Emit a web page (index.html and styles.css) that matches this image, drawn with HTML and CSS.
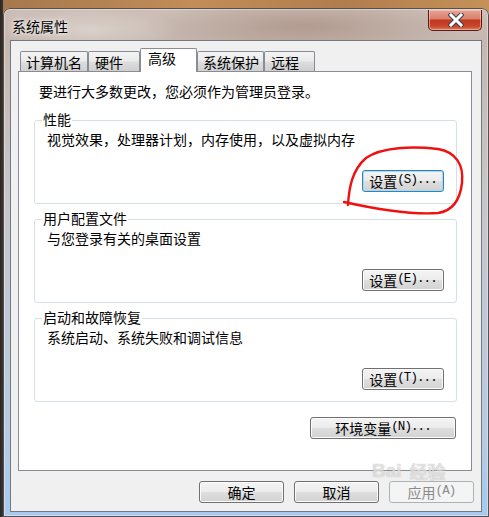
FILE: index.html
```html
<!DOCTYPE html>
<html lang="zh-CN">
<head>
<meta charset="utf-8">
<title>系统属性</title>
<link rel="stylesheet" href="styles.css">
</head>
<body>
<div class="window">
  <div class="titlebar">
    <span class="title">系统属性</span>
    <button class="close" aria-label="关闭">
      <svg width="16" height="14" viewBox="0 0 16 14">
        <path d="M3 2 L13 12 M13 2 L3 12" stroke="#3b3f55" stroke-width="5" stroke-linecap="square"/>
        <path d="M3 2 L13 12 M13 2 L3 12" stroke="#ffffff" stroke-width="3" stroke-linecap="square"/>
      </svg>
    </button>
  </div>
  <div class="client">
    <div class="tabs">
      <div class="tab w1">计算机名</div>
      <div class="tab w2">硬件</div>
      <div class="tab w3 active">高级</div>
      <div class="tab w4">系统保护</div>
      <div class="tab w5">远程</div>
    </div>
    <div class="panel">
      <p class="intro">要进行大多数更改，您必须作为管理员登录。</p>
      <div class="group">
        <span class="legend">性能</span>
        <p class="desc">视觉效果，处理器计划，内存使用，以及虚拟内存</p>
        <button class="btn set default">设置<span class="a">(S)...</span></button>
      </div>
      <div class="group">
        <span class="legend">用户配置文件</span>
        <p class="desc">与您登录有关的桌面设置</p>
        <button class="btn set">设置<span class="a">(E)...</span></button>
      </div>
      <div class="group">
        <span class="legend">启动和故障恢复</span>
        <p class="desc">系统启动、系统失败和调试信息</p>
        <button class="btn set">设置<span class="a">(T)...</span></button>
      </div>
      <button class="btn env">环境变量<span class="a">(N)...</span></button>
    </div>
    <div class="actions">
      <button class="btn act">确定</button>
      <button class="btn act">取消</button>
      <button class="btn act disabled">应用<span class="a">(A)</span></button>
    </div>
  </div>
</div>
<svg class="mark" width="489" height="517" viewBox="0 0 489 517">
  <path d="M348,205 C349,188 352,170 366,158 C382,147 412,146 438,149 C456,152 464,165 462,183 C460,200 452,211 438,213 C412,215 380,210 344,202" fill="none" stroke="#f01010" stroke-width="2.4" stroke-linecap="round"/>
</svg>
<div class="watermark"><span class="wm-big">Bai</span><span class="wm-cn">经验</span></div>
</body>
</html>
```
FILE: styles.css
```css
html, body {
  margin: 0;
  padding: 0;
}
body {
  width: 489px;
  height: 517px;
  overflow: hidden;
  position: relative;
  background:
    linear-gradient(to right, #2b2723 0, #3a342e 3px, transparent 3px),
    linear-gradient(to right, #a5784c, #c28d58 40%, #b07d4d 70%, #c69158);
  font-family: "Noto Sans CJK SC", sans-serif;
}
.window {
  margin: 8px 0 0 3px;
  width: 486px;
  height: 509px;
  box-sizing: border-box;
  padding: 0 7px;
  border-radius: 7px 7px 0 0;
  background:
    radial-gradient(ellipse 160px 30px at 62% 18px, rgba(150,115,100,0.45), transparent),
    radial-gradient(ellipse 90px 22px at 18% 22px, rgba(235,228,225,0.5), transparent),
    linear-gradient(to bottom, #cdbfb7 0, #c6b8b0 32px, #c7c7cb 200px, #b8cbe2 420px, #a7c9ee 100%);
  box-shadow: inset 0 0 0 1px rgba(45,35,35,0.75), inset 0 0 0 2px rgba(255,255,255,0.35);
}
.titlebar {
  display: flex;
  align-items: flex-start;
  height: 32px;
}
.title {
  margin: 10px 0 0 2px;
  font-size: 14px;
  line-height: 16px;
  color: #000;
  text-shadow: 0 0 6px rgba(255,255,255,0.9), 0 0 3px rgba(255,255,255,0.8);
}
.close {
  margin: 2px 0 0 auto;
  width: 54px;
  height: 21px;
  padding: 0;
  border: 1px solid #5a1a14;
  border-top: none;
  border-radius: 0 0 5px 5px;
  background: linear-gradient(to bottom, #e8a393 0, #d8806c 45%, #c2381f 50%, #c8452a 80%, #d77a5c 100%);
  box-shadow: inset 0 0 0 1px rgba(255,210,200,0.55);
  display: flex;
  align-items: center;
  justify-content: center;
}
.close svg { display: block; margin-left: 2px; }
.client {
  width: 472px;
  height: 472px;
  box-sizing: border-box;
  border: 1px solid #737a82;
  background: #f0f0f0;
  padding: 7px 0 0 7px;
  display: flex;
  flex-direction: column;
}
.tabs {
  display: flex;
  align-items: flex-end;
  height: 24px;
  margin: 0 0 -1px 2px;
  position: relative;
  z-index: 1;
}
.tab {
  height: 20px;
  margin-bottom: 1px;
  box-sizing: border-box;
  border: 1px solid #898c95;
  border-bottom: none;
  border-radius: 2px 2px 0 0;
  background: linear-gradient(to bottom, #f3f3f3 0, #ebebeb 45%, #dcdcdc 55%, #d0d0d0 100%);
  font-size: 14px;
  line-height: 16px;
  padding: 2px 0 0 5px;
  color: #000;
}
.tab.w1 { width: 68px; }
.tab.w2 { width: 52px; padding-left: 6px; }
.tab.w3 { width: 57px; }
.tab.w4 { width: 67px; }
.tab.w5 { width: 51px; padding-left: 6px; }
.tab.active {
  height: 24px;
  margin-bottom: 0;
  background: #fff;
  padding: 1px 0 0 7px;
}
.panel {
  width: 454px;
  height: 400px;
  box-sizing: border-box;
  border: 1px solid #898c95;
  background: #fff;
  padding-top: 11px;
  display: flex;
  flex-direction: column;
}
.intro {
  margin: 0;
  padding-left: 20px;
  font-size: 14px;
  line-height: 16px;
}
.group {
  position: relative;
  margin: 15px 0 0 15px;
  width: 423px;
  height: 84px;
  box-sizing: border-box;
  border: 1px solid #d5dfe5;
  border-radius: 3px;
  padding: 10px 12px 11px 12px;
  display: flex;
  flex-direction: column;
  align-items: flex-end;
}
.group:first-of-type { margin-top: 21px; }
.legend {
  position: absolute;
  top: -10px;
  left: 7px;
  padding: 0 1px;
  background: #fff;
  font-size: 14px;
  line-height: 16px;
}
.desc {
  margin: 0;
  align-self: stretch;
  font-size: 14px;
  line-height: 16px;
}
.btn {
  height: 22px;
  box-sizing: border-box;
  padding: 0;
  border: 1px solid #707070;
  border-radius: 3px;
  background: linear-gradient(to bottom, #f4f4f4 0, #ececec 48%, #dedede 52%, #d2d2d2 100%);
  box-shadow: inset 0 0 0 1px #fbfbfb;
  font-family: "Noto Sans CJK SC", sans-serif;
  font-size: 14px;
  line-height: 16px;
  color: #000;
  display: flex;
  align-items: center;
  justify-content: center;
}
.btn .a {
  font-family: "Liberation Mono", monospace;
  font-size: 12.5px;
  letter-spacing: -0.9px;
  position: relative;
  top: -1px;
}
.set {
  margin-top: auto;
  width: 82px;
}
.default {
  border-color: #3c7fb1;
  box-shadow: inset 0 0 0 1px #9fdcf7;
}
.env {
  align-self: flex-end;
  margin: 15px 15px 0 0;
  width: 146px;
}
.actions {
  display: flex;
  justify-content: flex-end;
  gap: 10px;
  margin: 10px 7px 0 0;
}
.act { width: 85px; }
.act.disabled {
  border-color: #adb2b5;
  background: #f4f4f4;
  box-shadow: none;
  color: #8a8a8a;
}
.mark {
  position: absolute;
  left: 0;
  top: 0;
  pointer-events: none;
}
.watermark {
  position: absolute;
  left: 372px;
  top: 462px;
  width: 100px;
  height: 18px;
  pointer-events: none;
  color: rgba(255,255,255,0.6);
  text-shadow: 0 0 1px rgba(120,120,120,0.6);
  display: flex;
  align-items: flex-start;
  gap: 8px;
}
.wm-big {
  font-family: "Liberation Sans", sans-serif;
  font-weight: bold;
  font-size: 19px;
  line-height: 18px;
}
.wm-cn {
  font-size: 18px;
  line-height: 18px;
  font-weight: bold;
}
```
